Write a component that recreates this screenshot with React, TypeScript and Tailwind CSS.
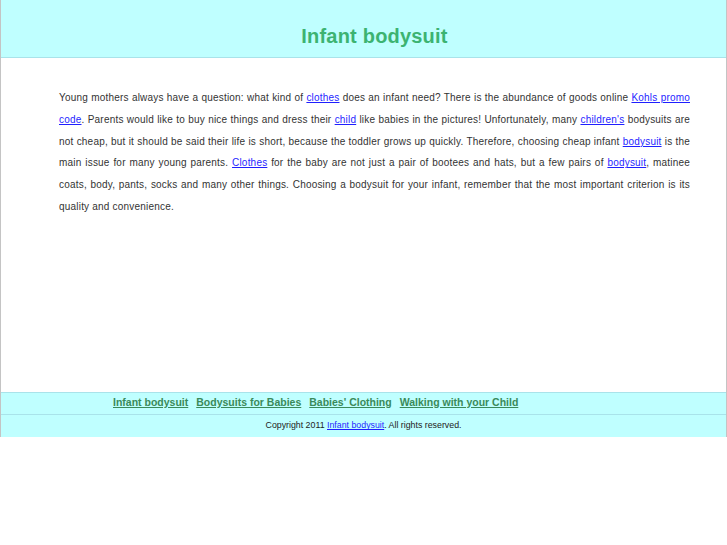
import React from "react";

const navLinks = [
  "Infant bodysuit",
  "Bodysuits for Babies",
  "Babies' Clothing",
  "Walking with your Child",
];

const A = ({ children }: { children: React.ReactNode }) => (
  <a href="#" className="text-[#1f1fff] underline">
    {children}
  </a>
);

const App = () => {
  return (
    <div className="w-[727px] bg-white font-['Liberation_Sans',Arial,sans-serif]">
      <div className="border-x border-[#c4c4c4]">
        <header className="h-[58px] bg-[#bfffff] border-b border-[#a9e3ea] pt-[24px] pl-[22px]">
          <h1 className="text-center text-[20px] leading-[24px] font-bold tracking-[0.2px] text-[#3cb371]">
            Infant bodysuit
          </h1>
        </header>

        <main className="h-[334px] pl-[58px] pr-[36px] pt-[29px]">
          <p className="text-justify text-[10px] leading-[21.8px] tracking-[0.2px] text-[#333]">
            Young mothers always have a question: what kind of <A>clothes</A>{" "}
            does an infant need? There is the abundance of goods online{" "}
            <A>Kohls promo code</A>. Parents would like to buy nice things and
            dress their <A>child</A> like babies in the pictures! Unfortunately,
            many <A>children's</A> bodysuits are not cheap, but it should be said
            their life is short, because the toddler grows up quickly. Therefore,
            choosing cheap infant <A>bodysuit</A> is the main issue for many
            young parents. <A>Clothes</A> for the baby are not just a pair of
            bootees and hats, but a few pairs of <A>bodysuit</A>, matinee coats,
            body, pants, socks and many other things. Choosing a bodysuit for
            your infant, remember that the most important criterion is its
            quality and convenience.
          </p>
        </main>

        <nav className="h-[23px] bg-[#bfffff] border-y border-[#a9e3ea] flex items-center gap-[8px] pl-[112px] pb-[2px]">
          {navLinks.map((l) => (
            <a
              key={l}
              href="#"
              className="text-[10.5px] font-bold text-[#3a8a5a] underline"
            >
              {l}
            </a>
          ))}
        </nav>

        <footer className="h-[22px] bg-[#bfffff] flex items-center justify-center text-[8.8px] text-[#222]">
          <span>
            Copyright 2011 <A>Infant bodysuit</A>. All rights reserved.
          </span>
        </footer>
      </div>
    </div>
  );
};

export default App;
